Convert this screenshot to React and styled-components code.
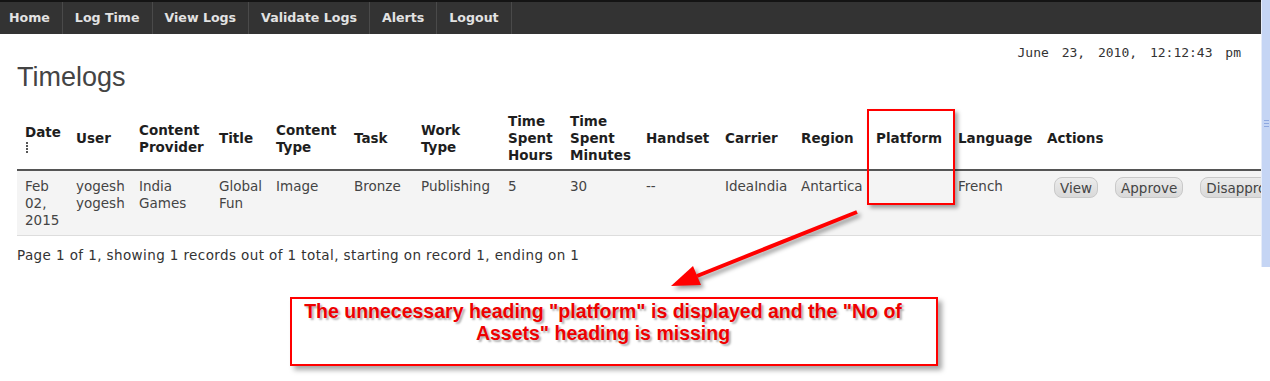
import React from 'react'
import styled, { createGlobalStyle } from 'styled-components'

const GlobalStyle = createGlobalStyle`
   html, body {
      margin: 0;
      padding: 0;
      background: #ffffff;
   }
   body {
      font-family: 'DejaVu Sans', Verdana, sans-serif;
   }
`

const menuItems = ['Home', 'Log Time', 'View Logs', 'Validate Logs', 'Alerts', 'Logout']

const columns = [
   { key: 'date', label: 'Date', width: 51, sortable: true },
   { key: 'user', label: 'User', width: 63 },
   { key: 'provider', label: 'Content Provider', width: 80 },
   { key: 'title', label: 'Title', width: 57 },
   { key: 'type', label: 'Content Type', width: 78 },
   { key: 'task', label: 'Task', width: 67 },
   { key: 'work', label: 'Work Type', width: 87 },
   { key: 'hours', label: 'Time Spent Hours', width: 62 },
   { key: 'minutes', label: 'Time Spent Minutes', width: 76 },
   { key: 'handset', label: 'Handset', width: 79 },
   { key: 'carrier', label: 'Carrier', width: 76 },
   { key: 'region', label: 'Region', width: 75 },
   { key: 'platform', label: 'Platform', width: 82 },
   { key: 'language', label: 'Language', width: 89 },
]

const logs = [
   {
      id: 1,
      date: 'Feb 02, 2015',
      user: 'yogesh yogesh',
      provider: 'India Games',
      title: 'Global Fun',
      type: 'Image',
      task: 'Bronze',
      work: 'Publishing',
      hours: '5',
      minutes: '30',
      handset: '--',
      carrier: 'IdeaIndia',
      region: 'Antartica',
      platform: '',
      language: 'French',
   },
]

const actions = ['View', 'Approve', 'Disapprove']

const App = () => {
   const tableWidth = columns.reduce((sum, c) => sum + c.width, 0) + 320

   return (
      <>
         <GlobalStyle />
         <Frame>
            <Page>
               <NavBar>
                  {menuItems.map((item) => (
                     <NavItem key={item}>{item}</NavItem>
                  ))}
               </NavBar>

               <Content>
                  <DateLine>June 23, 2010, 12:12:43 pm</DateLine>
                  <Heading>Timelogs</Heading>

                  <LogTable style={{ width: tableWidth }}>
                     <colgroup>
                        {columns.map((c) => (
                           <Col key={c.key} $width={c.width} />
                        ))}
                        <Col $width={320} />
                     </colgroup>
                     <thead>
                        <tr>
                           {columns.map((c) => (
                              <HeadCell key={c.key}>
                                 {c.label}
                                 {c.sortable && (
                                    <SortIcon width="4" height="12" viewBox="0 0 4 12">
                                       <rect x="1" y="0" width="2" height="2" fill="#555" />
                                       <rect x="1" y="3" width="2" height="2" fill="#555" />
                                       <rect x="1" y="6" width="2" height="2" fill="#555" />
                                       <rect x="1" y="9" width="2" height="2" fill="#555" />
                                    </SortIcon>
                                 )}
                              </HeadCell>
                           ))}
                           <HeadCell>Actions</HeadCell>
                        </tr>
                     </thead>
                     <tbody>
                        {logs.map((log) => (
                           <BodyRow key={log.id}>
                              {columns.map((c) => (
                                 <BodyCell key={c.key}>{log[c.key]}</BodyCell>
                              ))}
                              <ActionCell>
                                 {actions.map((a) => (
                                    <ActionButton key={a}>{a}</ActionButton>
                                 ))}
                              </ActionCell>
                           </BodyRow>
                        ))}
                     </tbody>
                  </LogTable>

                  <Pager>
                     Page 1 of 1, showing 1 records out of 1 total, starting on
                     record 1, ending on 1
                  </Pager>
               </Content>
            </Page>

            <ScrollTrack>
               <ScrollGrip />
            </ScrollTrack>

            {/* annotation layer drawn over the screenshot */}
            <HighlightBox />
            <ArrowLayer width="1270" height="381" viewBox="0 0 1270 381">
               <line x1="857" y1="212" x2="697" y2="276" stroke="#ff0000" strokeWidth="4" />
               <polygon points="671,286 701,285 693,266" fill="#ff0000" />
            </ArrowLayer>
            <NoteBox>
               <NoteText>
                  The unnecessary heading "platform" is displayed and the "No of
                  <br />
                  Assets" heading is missing
               </NoteText>
            </NoteBox>
         </Frame>
      </>
   )
}

export default App

const Frame = styled.div`
   position: relative;
   display: flex;
   align-items: flex-start;
   width: 1270px;
   height: 381px;
   overflow: hidden;
`

const Page = styled.div`
   width: 1261px;
   flex-shrink: 0;
   overflow: hidden;
`

const NavBar = styled.div`
   display: flex;
   height: 32px;
   background: #333333;
   border-top: 2px solid #141414;
`

const NavItem = styled.div`
   padding: 0 12px;
   line-height: 32px;
   font-family: 'DejaVu Sans', Verdana, sans-serif;
   font-weight: bold;
   font-size: 12.6px;
   color: #e2e2e2;
   border-right: 1px solid #4a4a4a;
   &:first-child {
      padding-left: 9px;
   }
`

const Content = styled.div`
   padding-left: 17px;
`

const DateLine = styled.div`
   margin-top: 10px;
   padding-right: 20px;
   text-align: right;
   font-family: 'DejaVu Sans Mono', 'Liberation Mono', monospace;
   font-size: 13px;
   line-height: 17px;
   word-spacing: 5px;
   color: #333333;
`

const Heading = styled.h1`
   margin: 1px 0 15px;
   font-family: 'Liberation Sans', Arial, sans-serif;
   font-weight: normal;
   font-size: 27px;
   line-height: 30px;
   color: #444444;
`

const LogTable = styled.table`
   table-layout: fixed;
   border-collapse: collapse;
`

const Col = styled.col`
   width: ${(p) => p.$width}px;
`

const HeadCell = styled.th`
   padding: 6px 8px 5px;
   text-align: left;
   vertical-align: middle;
   font-family: 'DejaVu Sans', Verdana, sans-serif;
   font-weight: bold;
   font-size: 13.5px;
   line-height: 17px;
   color: #1e1e1e;
   border-bottom: 2px solid #555555;
`

const SortIcon = styled.svg`
   display: block;
   margin: 1px 0 0 0;
`

const BodyRow = styled.tr`
   background: #f4f4f4;
   border-bottom: 1px solid #dddddd;
`

const BodyCell = styled.td`
   padding: 7px 8px 6px;
   vertical-align: top;
   font-family: 'DejaVu Sans', Verdana, sans-serif;
   font-size: 13.5px;
   line-height: 17px;
   color: #444444;
`

const ActionCell = styled(BodyCell)`
   padding-top: 6px;
   white-space: nowrap;
`

const ActionButton = styled.button`
   height: 21px;
   margin: 0 10px 0 7px;
   padding: 0 5px;
   border: 1px solid #c9c9c9;
   border-radius: 8px;
   background: linear-gradient(#ececec, #d9d9d9);
   font-family: 'DejaVu Sans', Verdana, sans-serif;
   font-size: 13.5px;
   color: #444444;
`

const Pager = styled.div`
   margin-top: 11px;
   font-family: 'DejaVu Sans', Verdana, sans-serif;
   font-size: 13.5px;
   letter-spacing: 0.4px;
   line-height: 17px;
   color: #333333;
`

const ScrollTrack = styled.div`
   position: relative;
   width: 8px;
   height: 267px;
   border-left: 1px solid #e6ecf8;
   background: #c5d5f4;
`

const ScrollGrip = styled.div`
   position: absolute;
   top: 120px;
   left: 2px;
   width: 5px;
   height: 5px;
   border-top: 1px solid #8ea8e0;
   border-bottom: 1px solid #8ea8e0;
   &::after {
      content: '';
      position: absolute;
      top: 2px;
      left: 0;
      width: 5px;
      border-top: 1px solid #8ea8e0;
   }
`

const HighlightBox = styled.div`
   position: absolute;
   left: 867px;
   top: 109px;
   width: 84px;
   height: 92px;
   border: 2px solid #ff0000;
   box-shadow: 3px 3px 4px rgba(0, 0, 0, 0.35);
`

const ArrowLayer = styled.svg`
   position: absolute;
   left: 0;
   top: 0;
   pointer-events: none;
   filter: drop-shadow(3px 3px 2px rgba(0, 0, 0, 0.4));
`

const NoteBox = styled.div`
   position: absolute;
   left: 290px;
   top: 297px;
   width: 622px;
   height: 64px;
   border: 2px solid #ff0000;
   box-shadow: 4px 4px 5px rgba(0, 0, 0, 0.35);
   padding: 1px 22px 0 0;
   box-sizing: content-box;
`

const NoteText = styled.div`
   text-align: center;
   font-family: 'Liberation Sans', Arial, sans-serif;
   font-weight: bold;
   font-size: 19.5px;
   line-height: 22px;
   color: #ee0000;
   text-shadow: 2px 2px 2px rgba(0, 0, 0, 0.3);
`
